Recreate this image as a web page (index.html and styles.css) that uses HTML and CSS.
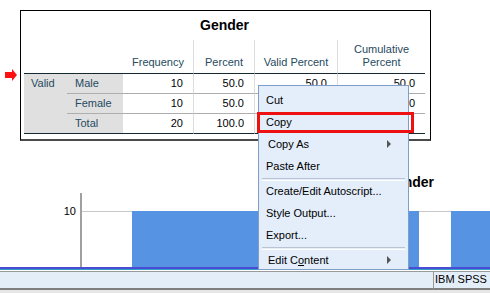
FILE: index.html
```html
<!DOCTYPE html>
<html>
<head>
<meta charset="utf-8">
<link rel="stylesheet" href="styles.css">
</head>
<body>
<div class="page">
  <div class="output">
    <svg class="marker" width="12" height="12" viewBox="0 0 12 12"><polygon points="0,3 7,3 7,0 12,6 7,12 7,9 0,9" fill="#ff1010"/></svg>
    <div class="pivot">
      <table class="freq">
        <colgroup>
          <col class="c1"><col class="c2"><col class="c3"><col class="c4"><col class="c5"><col class="c6">
        </colgroup>
        <tr><td class="title" colspan="6">Gender</td></tr>
        <tr class="head">
          <th></th><th></th>
          <th>Frequency</th>
          <th class="vl">Percent</th>
          <th class="vl">Valid Percent</th>
          <th class="vl">Cumulative<br>Percent</th>
        </tr>
        <tr class="row sep">
          <td class="lab grp last" rowspan="3">Valid</td>
          <td class="lab cat">Male</td>
          <td class="num">10</td>
          <td class="num vl">50.0</td>
          <td class="num vl">50.0</td>
          <td class="num vl">50.0</td>
        </tr>
        <tr class="row sep">
          <td class="lab cat">Female</td>
          <td class="num">10</td>
          <td class="num vl">50.0</td>
          <td class="num vl">50.0</td>
          <td class="num vl">100.0</td>
        </tr>
        <tr class="row end">
          <td class="lab cat">Total</td>
          <td class="num">20</td>
          <td class="num vl">100.0</td>
          <td class="num vl"></td>
          <td class="num vl"></td>
        </tr>
      </table>
    </div>
  </div>

  <div class="chart">
    <div class="chart-title">Gender</div>
    <div class="plot">
      <div class="yaxis"><span class="tick">10</span></div>
      <div class="plotarea">
        <div class="bars">
          <div class="bar bar-male"></div>
          <div class="bar bar-female"></div>
        </div>
      </div>
    </div>
  </div>

  <div class="footer">
    <div class="status">
      <div class="status-main"></div>
      <div class="status-panel">IBM SPSS Statistics Processor is ready</div>
    </div>
  </div>

  <div class="menu">
    <div class="item">Cut</div>
    <div class="item">Copy</div>
    <div class="item sub ind">Copy As<span class="arrow"></span></div>
    <div class="item">Paste After</div>
    <div class="msep"></div>
    <div class="item">Create/Edit Autoscript...</div>
    <div class="item">Style Output...</div>
    <div class="item">Export...</div>
    <div class="msep"></div>
    <div class="item sub ind">Edit C<u>o</u>ntent<span class="arrow"></span></div>
    <div class="hilite"></div>
  </div>
</div>
</body>
</html>
```

FILE: styles.css
```css
html, body {
  margin: 0;
  padding: 0;
  background: #ffffff;
}

.page {
  position: relative;
  width: 490px;
  height: 293px;
  overflow: hidden;
  font-family: "Liberation Sans", Arial, sans-serif;
  display: flex;
  flex-direction: column;
}

/* ---------- pivot table ---------- */
.output {
  display: flex;
  align-items: flex-start;
  padding: 10px 0 0 5px;
  height: 130px;
}

.marker {
  display: block;
  margin-top: 59px;
  margin-right: 3px;
  flex: none;
}

.pivot {
  border: 1px solid #000;
  border-bottom: 2px solid #4a4a4a;
  padding: 0 5px 5px 3px;
  background: #fff;
}

.freq {
  border-collapse: separate;
  border-spacing: 0;
  table-layout: fixed;
  width: 401px;
  font-size: 11px;
  color: #264a60;
}

.c1 { width: 43px; }
.c2 { width: 56px; }
.c3 { width: 70px; }
.c4 { width: 61px; }
.c5 { width: 83px; }
.c6 { width: 88px; }

.freq td, .freq th {
  padding: 0;
  font-weight: normal;
}

.freq .title {
  height: 29px;
  line-height: 29px;
  text-align: center;
  font-weight: bold;
  font-size: 14px;
  color: #000;
}

.head th {
  line-height: 13px;
  padding: 3px 2px 4px;
  text-align: center;
  vertical-align: bottom;
  border-bottom: 1px solid #152935;
}

.freq .vl {
  border-left: 1px solid #dcdcdc;
}

.row td {
  line-height: 19px;
  height: 19px;
  vertical-align: middle;
}

.sep td {
  border-bottom: 1px solid #aeaeae;
}

.end td, .freq td.last {
  border-bottom: 1px solid #152935;
}

.lab {
  background: #e0e0e0;
}

.grp {
  vertical-align: top !important;
  padding-left: 7px !important;
}

.cat {
  padding-left: 8px !important;
}

.num {
  text-align: right;
  padding-right: 10px !important;
  color: #010205;
}

/* ---------- chart ---------- */
.chart {
  height: 127px;
  display: flex;
  flex-direction: column;
}

.chart-title {
  margin-top: 34px;
  padding-left: 385px;
  font-size: 14px;
  font-weight: bold;
  line-height: 16px;
  color: #000;
}

.plot {
  margin-top: 3px;
  height: 74px;
  display: flex;
}

.yaxis {
  width: 80px;
  flex: none;
  text-align: right;
}

.tick {
  display: block;
  margin-top: 12px;
  padding-right: 4px;
  font-size: 11px;
  line-height: 12px;
  color: #000;
}

.plotarea {
  flex: 1;
  border-left: 2px solid #a0a0a0;
  padding-top: 18px;
  display: flex;
  flex-direction: column;
}

.bars {
  flex: 1;
  border-top: 1px solid #c8c8c8;
  display: flex;
  padding-left: 50px;
  gap: 32px;
}

.bar {
  background: #5694e3;
  margin-top: -1px;
}

.bar-male { width: 287px; }
.bar-female { flex: 1; }

/* ---------- footer ---------- */
.footer {
  height: 26px;
  flex: none;
  border-top: 2px solid #4b4bd6;
  background: #e6e6e6;
}

.status {
  border-top: 1px solid #2f9fc6;
  box-shadow: inset 0 1px 0 #fff;
  padding-top: 1px;
  display: flex;
}

.status-main {
  flex: 1;
  height: 16px;
  border-top: 1px solid #9a9a9a;
  background: #e4eef9;
  border-bottom: 2px solid #7f7f7f;
}

.status-panel {
  width: 57px;
  height: 19px;
  box-sizing: border-box;
  border-top: 1px solid #9a9a9a;
  border-left: 1px solid #9a9a9a;
  border-bottom: 2px solid #7f7f7f;
  background: #e4eef9;
  font-size: 11px;
  line-height: 15px;
  padding-left: 1px;
  white-space: nowrap;
  overflow: hidden;
  color: #000;
}

/* ---------- context menu ---------- */
.menu {
  position: absolute;
  left: 258px;
  top: 85px;
  width: 151px;
  height: 185px;
  box-sizing: border-box;
  padding-top: 3px;
  background: #e4eefa;
  border: 1px solid #7f9dc9;
  font-size: 11px;
  color: #000;
}

.item {
  position: relative;
  height: 22px;
  line-height: 22px;
  padding-left: 7px;
  white-space: nowrap;
}

.item.ind {
  padding-left: 9px;
}

.arrow {
  position: absolute;
  left: 128px;
  top: 7px;
  width: 0;
  height: 0;
  border-top: 4px solid transparent;
  border-bottom: 4px solid transparent;
  border-left: 4px solid #555;
}

.msep {
  height: 3px;
  margin: 0 3px;
  box-sizing: border-box;
  border-top: 1px solid #b8c3d3;
  border-bottom: 1px solid #fff;
  margin-top: 1px;
  margin-bottom: -1px;
}

.hilite {
  position: absolute;
  left: -2px;
  top: 26px;
  width: 157px;
  height: 21px;
  box-sizing: border-box;
  border: 3px solid #ee1111;
}
```
